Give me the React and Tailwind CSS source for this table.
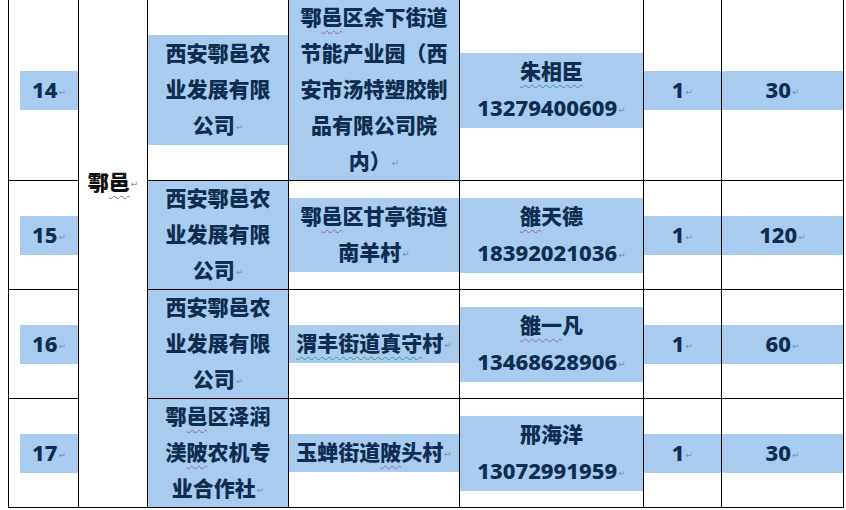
import React from "react";

const HL = "bg-[#a8ccef]";
const wavyP =
  "underline decoration-wavy decoration-[#9c5f8e] decoration-1 underline-offset-[5px] [text-decoration-skip-ink:none]";
const wavyG =
  "underline decoration-wavy decoration-[#3e9686] decoration-1 underline-offset-[5px] [text-decoration-skip-ink:none]";

function M() {
  return (
    <span className="font-['DejaVu_Sans'] font-normal text-[9px] text-[#7f91a5] ml-[1px] align-[3px]">
      ↵
    </span>
  );
}

function N({ children }) {
  return <span className="text-[22px] font-extrabold">{children}</span>;
}

function Cell({ children, className = "" }) {
  return (
    <div className={`bg-white flex flex-col justify-center ${className}`}>
      {children}
    </div>
  );
}

function P({ children, className = "" }) {
  return (
    <p className={`${HL} text-center leading-[36px] whitespace-nowrap ${className}`}>
      {children}
    </p>
  );
}

function NumCell({ n }) {
  return (
    <Cell>
      <P className="ml-[11px]">
        <N>{n}</N>
        <M />
      </P>
    </Cell>
  );
}

function Company({ lines, full }) {
  return (
    <Cell>
      <P className={full ? "h-full flex flex-col justify-center" : ""}>
        {lines.map((l, i) => (
          <span key={i} className="block">
            {l}
            {i === lines.length - 1 && <M />}
          </span>
        ))}
      </P>
    </Cell>
  );
}

function Contact({ name, phone }) {
  return (
    <Cell>
      <P>
        <span className="block">{name}</span>
        <span className="block">
          <N>{phone}</N>
          <M />
        </span>
      </P>
    </Cell>
  );
}

function Count({ v }) {
  return (
    <Cell>
      <P>
        <N>{v}</N>
        <M />
      </P>
    </Cell>
  );
}

const companyStd = ["西安鄠邑农", "业发展有限", "公司"];

export default function App() {
  return (
    <div className="w-[846px] h-[510px] bg-white overflow-hidden font-['Noto_Sans','Noto_Sans_CJK_SC',sans-serif] font-black text-[21px] text-[#0e2d50]">
      <div className="ml-[8px] w-[836px] grid grid-cols-[69px_68px_140px_170px_183px_77px_121px] grid-rows-[180px_108px_108px_108px] gap-px bg-black px-px pb-px">
        {/* Row 14 */}
        <NumCell n="14" />
        <div className="bg-white row-span-4 pt-[164px] text-center leading-[36px] text-[#111111]">
          <span>
            鄠<span className={wavyP}>邑</span>
          </span>
          <M />
        </div>
        <Company lines={companyStd} />
        <Cell>
          <P className="h-full flex flex-col justify-center">
            <span className="block">
              鄠<span className={wavyP}>邑</span>区余下街道
            </span>
            <span className="block">节能产业园（西</span>
            <span className="block">安市汤特塑胶制</span>
            <span className="block">品有限公司院</span>
            <span className="block">
              内）
              <M />
            </span>
          </P>
        </Cell>
        <Contact name={<span className={wavyG}>朱相臣</span>} phone="13279400609" />
        <Count v="1" />
        <Count v="30" />

        {/* Row 15 */}
        <NumCell n="15" />
        <Company lines={companyStd} full />
        <Cell>
          <P>
            <span className="block">
              鄠<span className={wavyP}>邑</span>区甘亭街道
            </span>
            <span className="block">
              南羊村
              <M />
            </span>
          </P>
        </Cell>
        <Contact
          name={
            <>
              <span className={wavyP}>雒</span>天德
            </>
          }
          phone="18392021036"
        />
        <Count v="1" />
        <Count v="120" />

        {/* Row 16 */}
        <NumCell n="16" />
        <Company lines={companyStd} full />
        <Cell>
          <P>
            <span className={wavyG}>渭丰街道真守</span>村
            <M />
          </P>
        </Cell>
        <Contact
          name={
            <>
              <span className={wavyP}>雒一</span>凡
            </>
          }
          phone="13468628906"
        />
        <Count v="1" />
        <Count v="60" />

        {/* Row 17 */}
        <NumCell n="17" />
        <Company
          full
          lines={[
            <>
              鄠<span className={wavyP}>邑</span>区泽润
            </>,
            <>
              渼<span className={wavyP}>陂</span>农机专
            </>,
            "业合作社",
          ]}
        />
        <Cell>
          <P>
            玉蝉街道<span className={wavyP}>陂</span>头村
            <M />
          </P>
        </Cell>
        <Contact name="邢海洋" phone="13072991959" />
        <Count v="1" />
        <Count v="30" />
      </div>
    </div>
  );
}
